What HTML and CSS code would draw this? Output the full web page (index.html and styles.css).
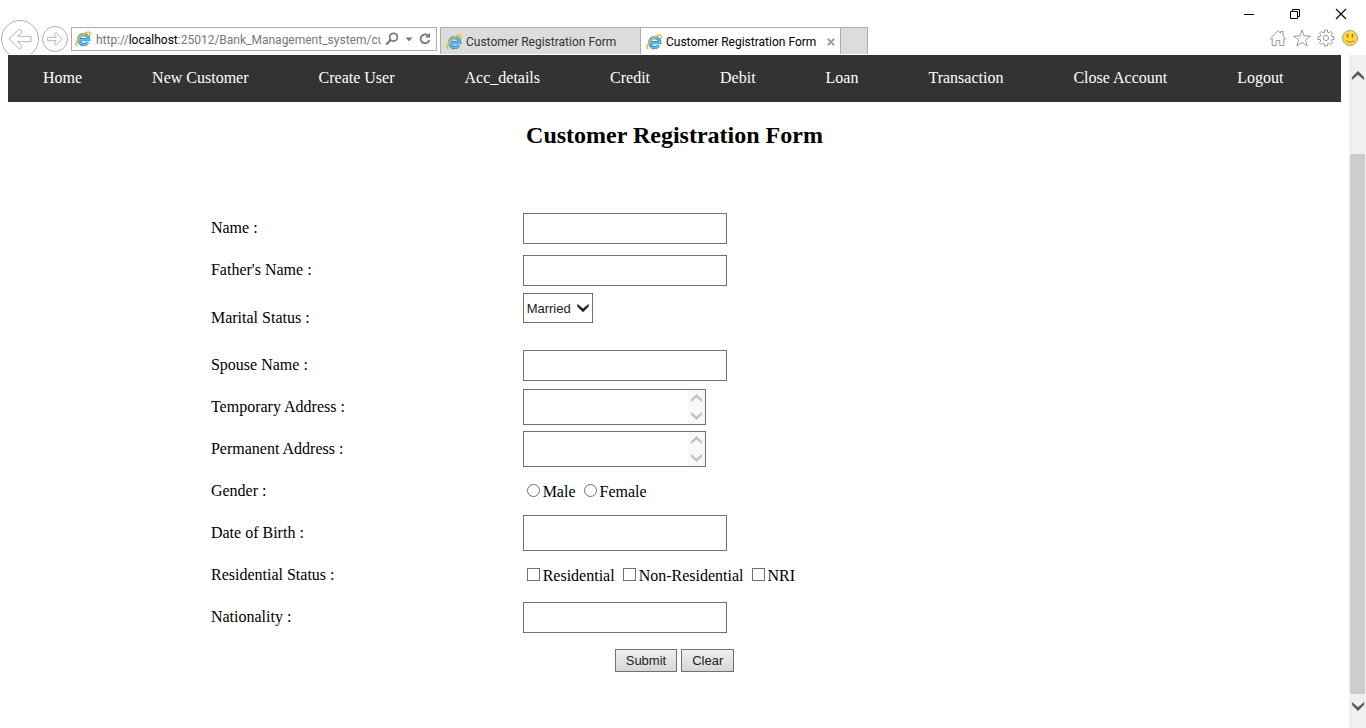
FILE: index.html
```html
<!DOCTYPE html>
<html lang="en">
<head>
<meta charset="utf-8">
<title>Customer Registration Form</title>
<link rel="stylesheet" href="styles.css">
</head>
<body>
<svg class="defs" aria-hidden="true">
  <symbol id="ie" viewBox="0 0 16 16">
    <path d="M4.500 8.700H13.700A5 5 0 1 0 12.700 11.600" fill="none" stroke="#2a7fc0" stroke-width="3.200"/>
    <path d="M4.500 8.700H13.700A5 5 0 1 0 12.900 11.400" fill="none" stroke="#62bdec" stroke-width="1.900"/>
    <path d="M2.300 15C-.8 14.600 1.900 8.300 6.500 4.500 10.500 1 15.300-.1 15.200 2.600c0 .9-.4 1.800-.8 2.500" fill="none" stroke="#f3ba22" stroke-width="1.500"/>
  </symbol>
  <symbol id="chev-up" viewBox="0 0 12 10"><path d="M1 8V6L6 1l5 5v2L6 3.800z" fill="currentColor" stroke="currentColor" stroke-width=".4"/></symbol>
  <symbol id="chev-down" viewBox="0 0 12 10"><path d="M1 2v2L6 9l5-5V2L6 6.200z" fill="currentColor" stroke="currentColor" stroke-width=".4"/></symbol>
</svg>

<header class="chrome">
  <div class="toolbar">
    <button class="round back" aria-label="Back"><svg width="24" height="24" viewBox="0 0 24 24"><path d="M1 12 11.500 1.800 13.600 4v1.500L9.500 9.300H23v5.400H9.500l4.100 3.800V20l-2.100 2.200z"/></svg></button>
    <button class="round forward" aria-label="Forward"><svg width="16" height="16" viewBox="0 0 16 16"><path d="M15.300 8 8.800 1.500 7.400 3v1.300l2 2H.7v3.400h8.700l-2 2V13l1.400 1.500z"/></svg></button>
    <div class="address">
      <svg width="16" height="16"><use href="#ie"/></svg>
      <span class="url">http://<b>localhost</b>:25012/Bank_Management_system/cus</span>
      <button aria-label="Search"><svg width="14" height="14" viewBox="0 0 14 14"><circle cx="8.500" cy="5.200" r="3.900" fill="none" stroke="#777" stroke-width="1.700"/><path d="M5.600 8 1.200 12.600" stroke="#777" stroke-width="2.200"/></svg></button>
      <button aria-label="Show addresses"><svg width="8" height="5" viewBox="0 0 8 5"><path d="M.5.500h7L4 4.300z" fill="#777"/></svg></button>
      <button aria-label="Refresh"><svg width="12" height="14" viewBox="0 0 12 14"><path d="M8.500 3.200A4.400 4.400 0 1 0 10.300 8" fill="none" stroke="#777" stroke-width="1.800"/><path d="M6 5.600h5V.700z" fill="#777"/></svg></button>
    </div>
    <div class="tabs">
      <button class="tab"><svg width="16" height="16"><use href="#ie"/></svg><span>Customer Registration Form</span></button>
      <button class="tab active"><svg width="16" height="16"><use href="#ie"/></svg><span>Customer Registration Form</span><svg class="x" width="8" height="8" viewBox="0 0 8 8"><path d="m.8.800 6.400 6.400m0-6.400L.8 7.200" stroke="#a3a3a3" stroke-width="2"/></svg></button>
      <button class="newtab" aria-label="New tab"></button>
    </div>
  </div>
  <div class="side">
    <div class="winbtns">
      <button aria-label="Minimize"><svg width="12" height="12" viewBox="0 0 12 12"><path d="M1 6.500h10" stroke="#000"/></svg></button>
      <button aria-label="Restore"><svg width="12" height="12" viewBox="0 0 12 12"><path d="M1.500 3.500h7v7h-7zM3.500 3.500v-2h7v7h-2" fill="none" stroke="#000"/></svg></button>
      <button aria-label="Close"><svg width="12" height="12" viewBox="0 0 12 12"><path d="m1 1 10 10M11 1 1 11" stroke="#000" stroke-width="1.100"/></svg></button>
    </div>
    <div class="tools">
      <button aria-label="Home"><svg width="18" height="18" viewBox="0 0 18 18" class="line"><path d="M1.200 9.500 9 1.700l2.500 2.500V2.500h2.500v4.200l2.800 2.800-1 1-1-1v7h-4v-5H7.200v5h-4v-7l-1 1z"/></svg></button>
      <button aria-label="Favorites"><svg width="18" height="18" viewBox="0 0 18 18" class="line"><path d="m9 1 2.100 5.900 6.200.2-4.900 3.800 1.800 6L9 13.400 3.800 16.900l1.800-6L.7 7.100l6.200-.2z"/></svg></button>
      <button aria-label="Tools"><svg width="18" height="18" viewBox="0 0 18 18" class="line"><path d="M7.500 1h3v2.200l1.500.6 1.600-1.500 2.100 2.100L14.200 6l.6 1.500H17v3h-2.200l-.6 1.500 1.500 1.600-2.100 2.100-1.600-1.500-1.500.6V17h-3v-2.200L6 14.200l-1.600 1.500-2.100-2.100L3.800 12l-.6-1.500H1v-3h2.200L3.800 6 2.300 4.400l2.100-2.100L6 3.800l1.500-.6z"/><circle cx="9" cy="9" r="2.600"/></svg></button>
      <button aria-label="Send a smile"><svg width="18" height="18" viewBox="0 0 18 18"><circle cx="9" cy="9" r="7.500" fill="#ffd83f" stroke="#aaa087"/><path d="M6.500 5v3.500m5-3.500v3.500" stroke="#a1811f" stroke-width="1.700"/><path d="M5 11.500q4 3.400 8 0" fill="none" stroke="#b08d21"/></svg></button>
    </div>
  </div>
</header>

<div class="viewport">
  <main class="page">
    <nav class="menu">
      <a href="#">Home</a><a href="#">New Customer</a><a href="#">Create User</a><a href="#">Acc_details</a><a href="#">Credit</a><a href="#">Debit</a><a href="#">Loan</a><a href="#">Transaction</a><a href="#">Close Account</a><a href="#">Logout</a>
    </nav>
    <h1>Customer Registration Form</h1>
    <form class="form">
      <div class="row"><label for="name">Name :</label><div><input class="text" id="name" type="text"></div></div>
      <div class="row"><label for="father">Father's Name :</label><div><input class="text" id="father" type="text"></div></div>
      <div class="row marital"><label for="marital">Marital Status :</label><div class="selectbox"><select id="marital"><option>Married</option><option>Unmarried</option></select><svg class="arrow" width="14" height="11"><use href="#chev-down"/></svg></div></div>
      <div class="row"><label for="spouse">Spouse Name :</label><div><input class="text" id="spouse" type="text"></div></div>
      <div class="row"><label for="temp">Temporary Address :</label><div class="area"><textarea id="temp"></textarea><span class="bar"><svg width="13" height="11"><use href="#chev-up"/></svg><svg width="13" height="11"><use href="#chev-down"/></svg></span></div></div>
      <div class="row"><label for="perm">Permanent Address :</label><div class="area"><textarea id="perm"></textarea><span class="bar"><svg width="13" height="11"><use href="#chev-up"/></svg><svg width="13" height="11"><use href="#chev-down"/></svg></span></div></div>
      <div class="row"><span>Gender :</span><div class="choices"><label><input type="radio" name="gender">Male</label><label><input type="radio" name="gender">Female</label></div></div>
      <div class="row"><label for="dob">Date of Birth :</label><div><input class="text tall" id="dob" type="text"></div></div>
      <div class="row"><span>Residential Status :</span><div class="choices"><label><input type="checkbox">Residential</label><label><input type="checkbox">Non-Residential</label><label><input type="checkbox">NRI</label></div></div>
      <div class="row"><label for="nation">Nationality :</label><div><input class="text" id="nation" type="text"></div></div>
      <div class="actions"><button type="submit">Submit</button><button type="reset">Clear</button></div>
    </form>
  </main>
  <div class="scroll" aria-hidden="true">
    <svg class="up" width="14" height="12"><use href="#chev-up"/></svg>
    <div class="thumb"></div>
    <svg class="down" width="14" height="12"><use href="#chev-down"/></svg>
  </div>
</div>
</body>
</html>
```
FILE: styles.css
```css
* { box-sizing: border-box; }
body {
  margin: 0;
  min-height: 100vh;
  display: flex;
  flex-direction: column;
  background: #fff;
  color: #000;
  font: 16px/18px "Liberation Serif", "Times New Roman", serif;
}
svg { display: block; flex: none; }
.defs { position: absolute; width: 0; height: 0; }

/* browser window */
.chrome {
  display: flex;
  justify-content: space-between;
  height: 54px;
  margin-bottom: 1px;
  overflow: hidden;
  font: 12px/16px Roboto, "Noto Sans", sans-serif;
}
.chrome button { padding: 0; border: 0; background: none; font: inherit; color: inherit; }
.toolbar { display: flex; align-items: flex-start; padding: 27px 0 0 1px; }
.chrome .round {
  display: flex;
  align-items: center;
  justify-content: center;
  flex: none;
  border: 1px solid #b0b0b0;
  border-radius: 50%;
}
.round path, .line { fill: none; stroke: #b4b4b4; }
.line { stroke: #9a9a9a; }
.chrome .back { width: 38px; height: 38px; margin: -7px 3px 0 0; }
.chrome .forward { width: 26px; height: 26px; margin: -1px 3px 0 0; }
.address {
  display: flex;
  align-items: center;
  width: 366px;
  height: 24px;
  margin-right: 3px;
  padding: 0 5px 0 3px;
  border: 1px solid #adadad;
}
.url { flex: 1; min-width: 0; margin: 0 4px 0 5px; padding-top: 1px; overflow: hidden; white-space: nowrap; color: #777; }
.url b { font-weight: normal; color: #000; }
.address button + button { margin-left: 6px; }
.tabs { display: flex; height: 27px; border: 1px solid #adadad; border-bottom: 0; background: #dcdcdc; color: #333; }
.chrome .tab { display: flex; align-items: center; gap: 4px; width: 199px; padding: 1px 5px 0; white-space: nowrap; }
.chrome .active { width: 201px; background: #fff; color: #000; border: 1px solid #adadad; border-width: 0 1px; }
.x { margin-left: auto; }
.chrome .newtab { width: 26px; }
.side { display: flex; flex-direction: column; align-items: flex-end; }
.winbtns { display: flex; gap: 34px; padding: 8px 19px 9px 0; }
.tools { display: flex; gap: 6px; padding-right: 7px; }

/* page area */
.viewport { flex: 1; display: flex; }
.page { flex: 1; padding: 0 8px; }
.menu { display: flex; background: #333; }
.menu a { padding: 14px 35px 15px; color: #fff; text-decoration: none; white-space: nowrap; }
h1 { margin: 20px 0 59px; font-size: 24px; line-height: 27px; text-align: center; }
.form { width: 70%; margin: 0 auto; padding: 0 3px; display: flex; flex-direction: column; gap: 2px; }
.row { display: grid; grid-template-columns: 1fr 2fr; column-gap: 4px; align-items: center; height: 40px; }
.marital { height: 51px; }
.text, textarea, select { display: block; border: 1px solid #707070; border-radius: 0; background: #fff; font: 13px "Liberation Sans", Arial, sans-serif; }
.text { width: 204px; height: 31px; }
.tall { height: 36px; }
.selectbox { position: relative; align-self: start; width: 70px; padding-top: 1px; }
select { width: 70px; height: 30px; padding: 0 3px; appearance: none; color: #222; }
.arrow { position: absolute; right: 3px; top: 10px; color: #222; pointer-events: none; }
.area { position: relative; width: 183px; }
textarea { width: 183px; height: 36px; padding: 2px 18px 2px 2px; resize: none; overflow: hidden; }
.bar {
  position: absolute;
  inset: 1px 1px 1px auto;
  width: 17px;
  display: flex;
  flex-direction: column;
  align-items: center;
  justify-content: space-between;
  padding: 3px 0;
  background: #f8f8f8;
  color: #bfbfbf;
}
.choices { display: flex; gap: 8px; padding: 2px 0 0 4px; }
.choices label { display: flex; align-items: center; gap: 3px; }
.choices input { appearance: none; width: 13px; height: 13px; margin: 0 0 3px; border: 1px solid #707070; background: #fff; }
.choices input[type="radio"] { border-radius: 50%; }
.choices input:checked { background: #444; }
.actions { display: flex; justify-content: center; gap: 4px; padding: 10px 0; }
.actions button {
  height: 23px;
  padding: 0 10px;
  border: 1px solid #707070;
  background: linear-gradient(#efefef, #d6d6d6);
  color: #222;
  font: 13px "Liberation Sans", Arial, sans-serif;
}

/* scroll bar */
.scroll { display: flex; flex-direction: column; align-items: center; width: 17px; background: #f0f0f0; color: #555; }
.up { margin: 15px 0 72px; }
.thumb { flex: 1; width: 15px; background: #cdcdcd; }
.down { margin: 6px 0 16px; }
```
